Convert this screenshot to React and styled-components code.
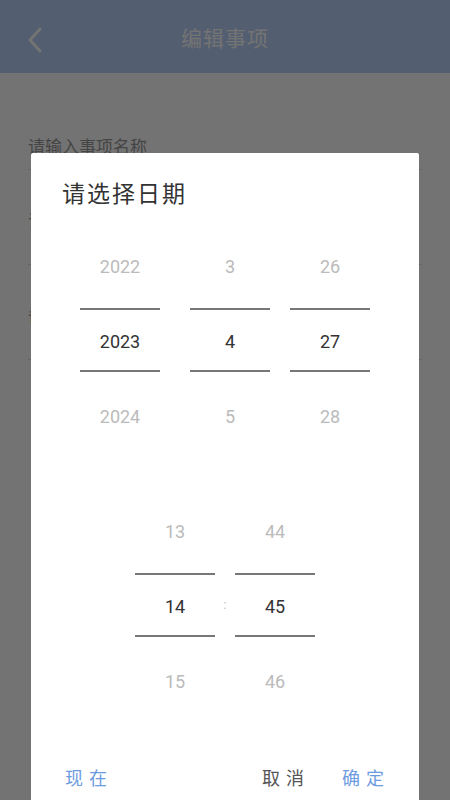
import React from "react";
import styled, { createGlobalStyle } from "styled-components";

const GlobalStyle = createGlobalStyle`
  html, body {
    margin: 0;
    padding: 0;
    background: #ffffff;
    font-family: Roboto, "Noto Sans CJK SC", sans-serif;
  }
`;

const dateCols = [
  { items: ["2022", "2023", "2024"], offset: 0 },
  { items: ["3", "4", "5"], offset: 30 },
  { items: ["26", "27", "28"], offset: 20 },
];

function App() {
  return (
    <>
      <GlobalStyle />
      <Page>
        <Header>
          <BackButton>
            <svg width="16" height="26" viewBox="0 0 16 26">
              <path
                d="M13 2 L3 13 L13 24"
                fill="none"
                stroke="#ffffff"
                strokeWidth="3"
                strokeLinecap="round"
                strokeLinejoin="round"
              />
            </svg>
          </BackButton>
          <HeaderTitle>编辑事项</HeaderTitle>
        </Header>
        <Form>
          <Field $first>
            <Label>请输入事项名称</Label>
          </Field>
          <Field>
            <Label>请选择时间</Label>
          </Field>
          <Field>
            <Label>备注</Label>
          </Field>
        </Form>
      </Page>

      <Overlay>
        <Dialog>
          <DialogTitle>请选择日期</DialogTitle>

          <Picker $left={49}>
            {dateCols.map((col) => (
              <Column key={col.items[0]} $offset={col.offset}>
                {col.items.map((v, j) => (
                  <Item key={v} $selected={j === 1}>
                    {v}
                  </Item>
                ))}
              </Column>
            ))}
          </Picker>

          <Picker $left={104} $top={75}>
            <Column>
              <Item>13</Item>
              <Item $selected>14</Item>
              <Item>15</Item>
            </Column>
            <Colon>:</Colon>
            <Column>
              <Item>44</Item>
              <Item $selected>45</Item>
              <Item>46</Item>
            </Column>
          </Picker>

          <Actions>
            <ActionButton $color="#6d9be0">现在</ActionButton>
            <Spacer />
            <ActionButton $color="#555555">取消</ActionButton>
            <ActionButton $color="#6d9be0">确定</ActionButton>
          </Actions>
        </Dialog>
      </Overlay>
    </>
  );
}

const Page = styled.div`
  width: 450px;
  min-height: 800px;
  background: #ffffff;
  display: flex;
  flex-direction: column;
`;

const Header = styled.header`
  height: 73px;
  background: #b8d1f9;
  display: flex;
  align-items: center;
  justify-content: center;
  position: relative;
`;

const BackButton = styled.div`
  position: absolute;
  left: 27px;
  top: 27px;
  display: flex;
`;

const HeaderTitle = styled.h1`
  margin: 0;
  font-family: "Noto Sans CJK SC", sans-serif;
  font-size: 21px;
  font-weight: 400;
  color: #ffffff;
  letter-spacing: 1px;
`;

const Form = styled.div`
  display: flex;
  flex-direction: column;
  padding: 56px 28px 0;
`;

const Field = styled.div`
  height: ${(p) => (p.$first ? "41px" : "95px")};
  display: flex;
  flex-direction: column;
  justify-content: ${(p) => (p.$first ? "flex-start" : "center")};
  border-bottom: 1px solid #dddddd;
  padding-top: 4px;
  box-sizing: border-box;
`;

const Label = styled.span`
  font-family: "Noto Sans CJK SC", sans-serif;
  font-size: 17px;
  color: #999999;
`;

const Overlay = styled.div`
  position: fixed;
  inset: 0;
  background: rgba(0, 0, 0, 0.55);
  display: flex;
  align-items: flex-start;
  padding: 153px 0 0 31px;
  overflow: hidden;
`;

const Dialog = styled.div`
  width: 388px;
  height: 680px;
  background: #ffffff;
  border-radius: 2px;
  display: flex;
  flex-direction: column;
  box-sizing: border-box;
  padding-top: 25px;
`;

const DialogTitle = styled.h2`
  margin: 0 0 0 31px;
  font-family: "Noto Sans CJK SC", sans-serif;
  font-size: 23px;
  line-height: 28px;
  font-weight: 400;
  color: #333333;
  letter-spacing: 2px;
`;

const Picker = styled.div`
  display: flex;
  align-items: flex-start;
  padding-left: ${(p) => p.$left}px;
  margin-top: ${(p) => (p.$top ? p.$top : 41)}px;
`;

const Column = styled.div`
  width: 80px;
  margin-left: ${(p) => p.$offset || 0}px;
  display: flex;
  flex-direction: column;
  align-items: stretch;
  gap: 21px;
`;

const Item = styled.div`
  height: ${(p) => (p.$selected ? "60px" : "40px")};
  line-height: ${(p) => (p.$selected ? "63px" : "40px")};
  text-align: center;
  font-family: Roboto, sans-serif;
  font-size: 18px;
  color: ${(p) => (p.$selected ? "#333333" : "#bbbbbb")};
  border-top: ${(p) => (p.$selected ? "2px solid #777777" : "none")};
  border-bottom: ${(p) => (p.$selected ? "2px solid #777777" : "none")};
  margin-bottom: ${(p) => (p.$selected ? "4px" : "0")};
`;

const Colon = styled.div`
  width: 20px;
  height: 64px;
  margin-top: 61px;
  line-height: 64px;
  text-align: center;
  font-family: Roboto, sans-serif;
  font-size: 12px;
  color: #bbbbbb;
`;

const Actions = styled.div`
  display: flex;
  align-items: center;
  padding: 0 35px 0 34px;
  margin-top: 63px;
  gap: 38px;
`;

const Spacer = styled.div`
  flex: 1;
`;

const ActionButton = styled.span`
  font-family: "Noto Sans CJK SC", sans-serif;
  font-size: 18px;
  line-height: 24px;
  letter-spacing: 6px;
  margin-right: -6px;
  color: ${(p) => p.$color};
`;

export default App;
